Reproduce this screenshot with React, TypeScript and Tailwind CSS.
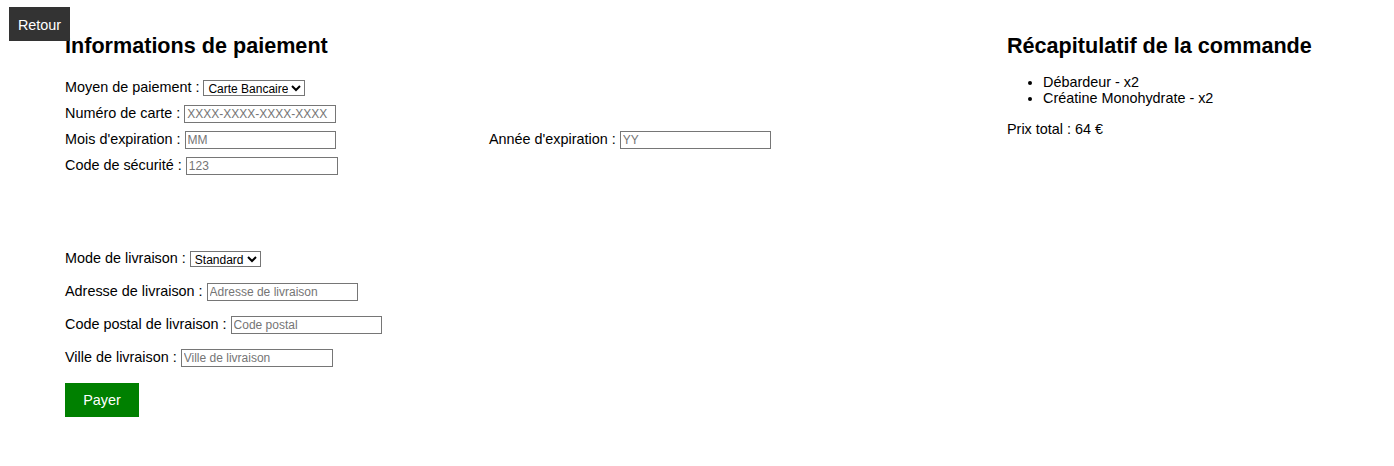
import React from "react";

const font = "font-['Liberation_Sans',Arial,sans-serif]";
const inputCls =
  "h-[18px] border border-[#767676] bg-white px-[2px] text-[12px] text-black placeholder:text-[#757575] outline-none";
const selectCls =
  "h-[16px] border border-[#767676] bg-white text-[12px] leading-none text-black";

function Row({ label, children, className = "" }: { label: string; children: React.ReactNode; className?: string }) {
  return (
    <div className={"flex items-center " + className}>
      <span className="whitespace-pre">{label} : </span>
      {children}
    </div>
  );
}

export default function App() {
  return (
    <div className={`relative min-h-[466px] w-[1394px] bg-white text-[14.4px] text-black ${font}`}>
      <button className="absolute left-[9px] top-[7px] h-[34px] w-[61px] bg-[#333333] pt-[3px] text-[14.4px] text-white">
        Retour
      </button>

      <div className="flex pl-[65px] pt-[34px]">
        {/* paiement + livraison */}
        <div className="w-[848px]">
          <h2 className="h-[24px] text-[21.6px] font-bold leading-[24px]">Informations de paiement</h2>

          <div className="mt-[21px] flex flex-col gap-[8px]">
            <Row label="Moyen de paiement" className="h-[18px]">
              <select className={selectCls + " w-[102px]"} defaultValue="cb">
                <option value="cb">Carte Bancaire</option>
                <option value="pp">PayPal</option>
              </select>
            </Row>
            <Row label="Numéro de carte" className="h-[18px]">
              <input className={inputCls + " w-[152px]"} placeholder="XXXX-XXXX-XXXX-XXXX" />
            </Row>
            <div className="flex h-[18px]">
              <Row label="Mois d'expiration" className="w-[424px]">
                <input className={inputCls + " w-[151px]"} placeholder="MM" />
              </Row>
              <Row label="Année d'expiration">
                <input className={inputCls + " w-[151px]"} placeholder="YY" />
              </Row>
            </div>
            <Row label="Code de sécurité" className="h-[18px]">
              <input className={inputCls + " w-[152px]"} placeholder="123" />
            </Row>
          </div>

          <div className="mt-[75px] flex flex-col gap-[15px]">
            <Row label="Mode de livraison" className="h-[18px]">
              <select className={selectCls + " w-[71px]"} defaultValue="std">
                <option value="std">Standard</option>
                <option value="exp">Express</option>
              </select>
            </Row>
            <Row label="Adresse de livraison" className="h-[18px]">
              <input className={inputCls + " w-[151px]"} placeholder="Adresse de livraison" />
            </Row>
            <Row label="Code postal de livraison" className="h-[18px]">
              <input className={inputCls + " w-[151px]"} placeholder="Code postal" />
            </Row>
            <Row label="Ville de livraison" className="h-[18px]">
              <input className={inputCls + " w-[152px]"} placeholder="Ville de livraison" />
            </Row>
          </div>

          <button className="mt-[16px] h-[34px] w-[74px] bg-[#008000] pt-[2px] text-[14.4px] text-white">Payer</button>
        </div>

        {/* récapitulatif */}
        <div className="ml-[94px]">
          <h2 className="h-[24px] text-[21.6px] font-bold leading-[24px]">Récapitulatif de la commande</h2>
          <ul className="mt-[16px] list-disc pl-[36px] leading-[16px]">
            <li>Débardeur - x2</li>
            <li>Créatine Monohydrate - x2</li>
          </ul>
          <p className="mt-[15px] leading-[16px]">Prix total : 64 €</p>
        </div>
      </div>
    </div>
  );
}
